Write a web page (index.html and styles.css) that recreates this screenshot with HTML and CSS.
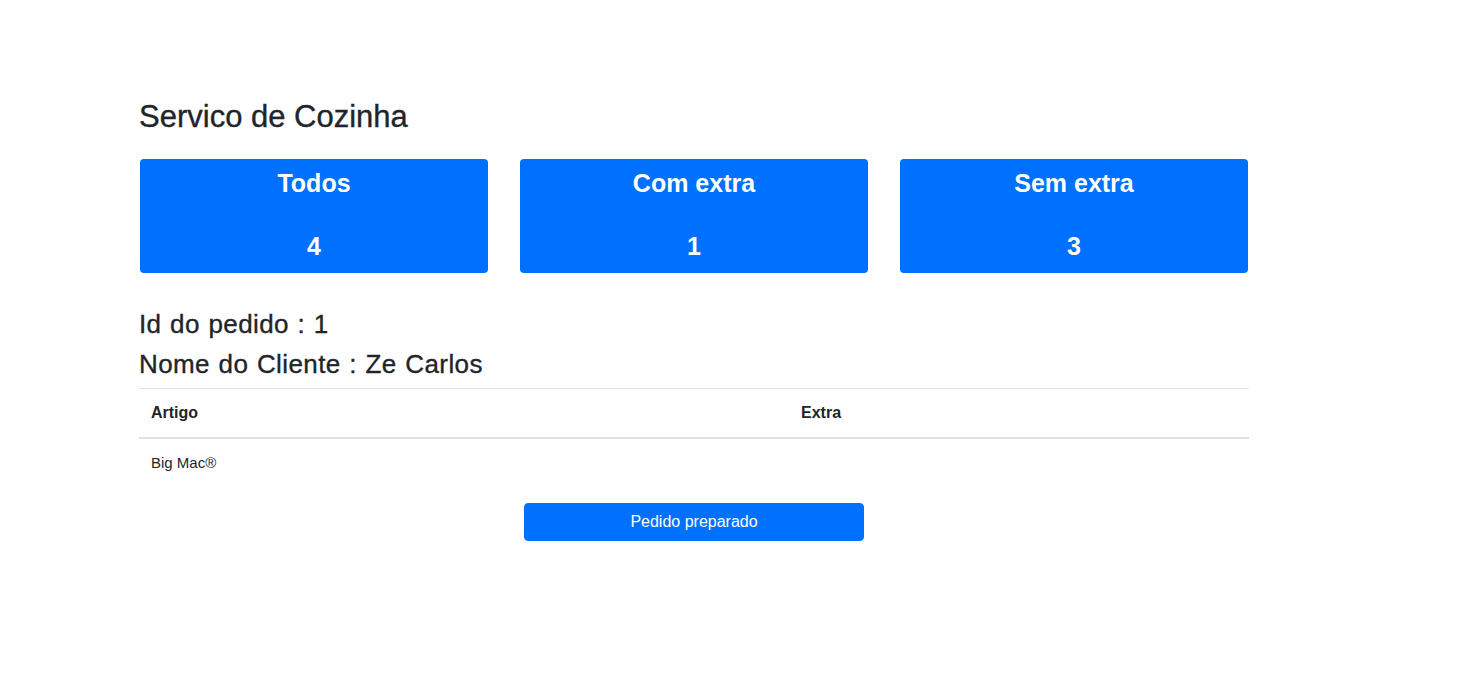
FILE: index.html
```html
<!DOCTYPE html>
<html lang="pt">
<head>
<meta charset="utf-8">
<title>Servico de Cozinha</title>
<link rel="stylesheet" href="styles.css">
</head>
<body>
<main class="page">
  <h1 class="title">Servico de Cozinha</h1>
  <div class="stats">
    <div class="stat">
      <h2 class="stat-label">Todos</h2>
      <p class="stat-value">4</p>
    </div>
    <div class="stat">
      <h2 class="stat-label">Com extra</h2>
      <p class="stat-value">1</p>
    </div>
    <div class="stat">
      <h2 class="stat-label">Sem extra</h2>
      <p class="stat-value">3</p>
    </div>
  </div>
  <section class="order">
    <h3 class="order-line order-id">Id do pedido : 1</h3>
    <h3 class="order-line order-client">Nome do Cliente : Ze Carlos</h3>
    <table class="items">
      <colgroup>
        <col class="col-item">
        <col class="col-extra">
      </colgroup>
      <thead>
        <tr><th>Artigo</th><th>Extra</th></tr>
      </thead>
      <tbody>
        <tr><td>Big Mac®</td><td></td></tr>
      </tbody>
    </table>
    <div class="actions">
      <button class="btn-primary" type="button">Pedido preparado</button>
    </div>
  </section>
</main>
</body>
</html>
```

FILE: styles.css
```css
* { box-sizing: border-box; }

html, body {
  margin: 0;
  padding: 0;
  background: #ffffff;
}

body {
  font-family: "Liberation Sans", Arial, sans-serif;
  color: #212529;
  font-size: 16px;
  line-height: 24px;
}

.page {
  width: 1110px;
  margin-left: 139px;
  padding-top: 98px;
  display: flex;
  flex-direction: column;
}

.title {
  margin: 0 0 23px;
  font-size: 31px;
  line-height: 38px;
  font-weight: 400;
  -webkit-text-stroke: 0.35px currentColor;
}

.stats {
  display: grid;
  grid-template-columns: repeat(3, 1fr);
  column-gap: 32px;
  padding: 0 1px;
}

.stat {
  background: #0071ff;
  color: #ffffff;
  border-radius: 4px;
  height: 114px;
  padding: 9px 12px 12px;
  display: flex;
  flex-direction: column;
  align-items: center;
  text-align: center;
}

.stat-label,
.stat-value {
  margin: 0;
  font-size: 25px;
  line-height: 30px;
  font-weight: 700;
}

.stat-value {
  margin-top: 33px;
}

.order {
  margin-top: 36px;
  display: flex;
  flex-direction: column;
}

.order-line {
  margin: 0;
  font-size: 26px;
  line-height: 30px;
  font-weight: 400;
  letter-spacing: 0.4px;
  word-spacing: 1px;
  -webkit-text-stroke: 0.35px currentColor;
}

.order-id { margin-bottom: 10px; }
.order-client { margin-bottom: 9px; }

.items {
  width: 100%;
  border-collapse: collapse;
  table-layout: fixed;
}

.col-item { width: 650px; }

.items th,
.items td {
  padding: 12px;
  text-align: left;
  vertical-align: top;
  border-top: 1px solid #dee2e6;
  font-size: 16px;
  line-height: 24px;
}

.items th {
  font-weight: 700;
  border-bottom: 2px solid #dee2e6;
}

.items td {
  border-top: none;
  font-size: 15px;
}

.actions {
  margin-top: 16px;
  display: flex;
  justify-content: center;
}

.btn-primary {
  width: 340px;
  height: 38px;
  padding: 6px 12px;
  border: 1px solid #0071ff;
  border-radius: 4px;
  background: #0071ff;
  color: #ffffff;
  font-family: "Liberation Sans", Arial, sans-serif;
  font-size: 16px;
  line-height: 24px;
  cursor: pointer;
}
```
